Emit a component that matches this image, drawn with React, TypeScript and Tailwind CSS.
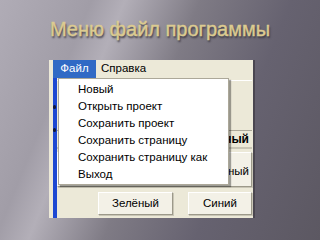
const menuItems = [
  "Новый",
  "Открыть проект",
  "Сохранить проект",
  "Сохранить страницу",
  "Сохранить страницу как",
  "Выход",
];

const font = { fontFamily: "'Liberation Sans', Arial, sans-serif" };

function XpButton({ label, className = "" }: { label: string; className?: string }) {
  return (
    <div
      className={`flex items-center justify-center bg-[#f3f1e7] border border-[#ffffff] border-r-[#9c998a] border-b-[#9c998a] shadow-[1px_1px_0_#c9c6b6] text-[11.5px] text-black ${className}`}
    >
      {label}
    </div>
  );
}

export default function App() {
  return (
    <div
      className="relative w-[320px] h-[240px] overflow-hidden flex flex-col bg-[linear-gradient(112deg,#b0acb6_0%,#a19da7_22%,#b3afb8_30%,#7f7b85_48%,#666270_70%,#5c5862_100%)]"
      style={font}
    >
      <div className="pt-[17px] text-center text-[20px] leading-[24px] text-[#dccb90] [text-shadow:1px_2px_2px_#3a3640] [-webkit-text-stroke:0.4px_#dccb90]">
        Меню файл программы
      </div>

      <div className="mt-[19px] ml-[49px] w-[204px] h-[158px] flex flex-col bg-[#ece9d8] shadow-[2px_0_0_#4a4650]">
        {/* menu bar */}
        <div className="h-[18px] flex items-stretch text-[11.5px]">
          <div className="w-[4px]" />
          <div className="w-[43px] bg-[#316ac5] text-white flex items-center justify-center">Файл</div>
          <div className="pl-[5px] flex items-center text-black">Справка</div>
        </div>

        {/* window body */}
        <div className="flex-1 flex">
          <div className="w-[4px]" />
          <div className="w-[4px] bg-[#1d48d2] flex flex-col">
            <div className="mt-[27px] w-[3px] h-[4px] rounded-full bg-[#10183a]" />
            <div className="mt-[19px] w-[3px] h-[4px] rounded-full bg-[#10183a]" />
          </div>
          <div className="flex-1 flex flex-col pr-[1px]">
            <div className="h-[52px] pt-[2px]">
              <div className="h-px bg-white" />
            </div>
            <div className="h-[19px] flex items-center justify-end pr-[3px] border-t border-[#aca899] border-b-2 border-b-[#c9c6b6] font-bold text-[12px]">
              Красный
            </div>
            <XpButton label="Чёрный" className="mt-[3px] h-[35px] justify-end pr-[2px] pt-[5px]" />
            <div className="mt-[5px] flex pl-[41px] gap-[15px]">
              <XpButton label="Зелёный" className="w-[75px] h-[23px]" />
              <XpButton label="Синий" className="w-[64px] h-[23px]" />
            </div>
          </div>
        </div>
      </div>

      {/* dropdown */}
      <div className="absolute left-[58px] top-[78px] w-[171px] h-[107px] bg-white border border-[#aca899] shadow-[2px_2px_1px_rgba(0,0,0,0.35)] pt-[2px]">
        {menuItems.map((item) => (
          <div key={item} className="h-[17px] flex items-center pl-[19px] text-[11.5px] text-black">
            {item}
          </div>
        ))}
      </div>
    </div>
  );
}
